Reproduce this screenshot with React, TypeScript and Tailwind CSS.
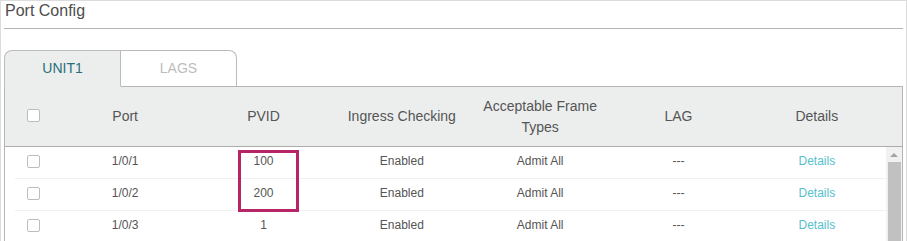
const rows = [
  { port: '1/0/1', pvid: '100' },
  { port: '1/0/2', pvid: '200' },
  { port: '1/0/3', pvid: '1' },
];

function Checkbox({ className = '' }: { className?: string }) {
  return <span className={`block h-[13px] w-[13px] rounded-[2px] border border-[#bdbdbd] bg-white ${className}`} />;
}

export default function App() {
  return (
    <div className="relative h-[241px] w-[907px] overflow-hidden border-x border-t border-[#dcdcdc] bg-white px-[3px] font-['Liberation_Sans',Arial,sans-serif]">
      <div className="h-[28px] border-b border-[#b4b4b4] pl-px text-[16px] leading-[20px] text-[#4d4d4d]">Port Config</div>

      {/* tabs */}
      <div className="relative z-10 -mb-px mt-[21px] flex">
        <div className="flex h-[37px] w-[117px] items-center justify-center rounded-tl-[8px] border-x border-t border-b border-[#bbbbbb] border-b-[#eceeee] bg-[#eceeee] text-[14px] text-[#286e78]">
          UNIT1
        </div>
        <div className="flex h-[37px] w-[116px] items-center justify-center rounded-tr-[8px] border-r border-t border-b border-[#bbbbbb] border-b-[#b5b5b5] bg-white text-[14px] text-[#bdbdbd]">
          LAGS
        </div>
      </div>

      <div className="h-[200px] border border-[#b5b5b5]">
        <div className="grid h-[60px] grid-cols-[51px_repeat(6,1fr)] items-center border-b border-[#acacac] bg-[#eceeee] pr-[16px] text-center text-[14px] leading-[21px] text-[#555]">
          <div className="pl-[22px]">
            <Checkbox className="mb-[3px] bg-[#f4f5f5]" />
          </div>
          <div>Port</div>
          <div>PVID</div>
          <div>Ingress Checking</div>
          <div className="px-3">Acceptable Frame Types</div>
          <div>LAG</div>
          <div>Details</div>
        </div>

        <div className="flex h-[140px]">
          <div className="ml-[10px] w-[871px]">
            {rows.map((r) => (
              <div
                key={r.port}
                className="grid h-[32px] grid-cols-[41px_repeat(6,1fr)] items-center border-b border-[#f0f0f0] pb-[3px] text-center text-[12px] text-[#555]"
              >
                <div className="pl-[12px]">
                  <Checkbox />
                </div>
                <div>{r.port}</div>
                <div>{r.pvid}</div>
                <div>Enabled</div>
                <div>Admit All</div>
                <div>---</div>
                <div className="text-[#56bfcb]">Details</div>
              </div>
            ))}
          </div>
          <div className="flex w-[16px] flex-col bg-[#f1f1f1]">
            <div className="flex h-[15px] items-center justify-center">
              <span className="h-0 w-0 border-x-[4px] border-b-[4px] border-x-transparent border-b-[#a3a3a3]" />
            </div>
            <div className="ml-[2px] mr-[1px] flex-1 bg-[#c1c1c1]" />
          </div>
        </div>
      </div>

      <div className="absolute left-[237px] top-[149px] h-[62px] w-[61px] border-[3px] border-[#b62565]" />
    </div>
  );
}
